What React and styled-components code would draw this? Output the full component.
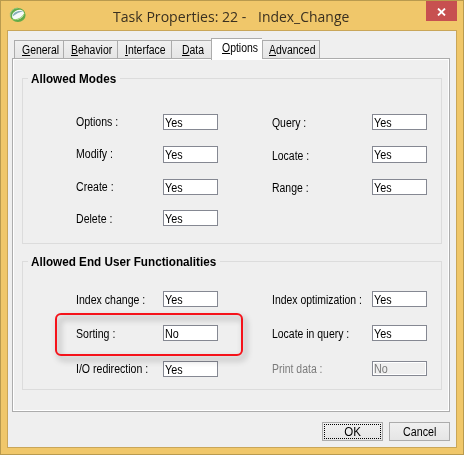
import React from "react";
import styled, { createGlobalStyle } from "styled-components";

const GlobalStyle = createGlobalStyle`
  * { box-sizing: border-box; }
  body { margin: 0; overflow: hidden; }
`;

const Window = styled.div`
  width: 464px;
  height: 455px;
  background: #f0c76a;
  border: 1px solid #b99a4e;
  padding: 0 6px 6px;
  font: 12px/16px "Liberation Sans", Arial, sans-serif;
  color: #000;
`;

const TitleBar = styled.header`
  height: 29px;
  display: flex;
  align-items: flex-start;
`;

const AppIcon = styled.svg`
  flex: none;
  width: 17px;
  height: 16px;
  margin: 6px 0 0 2px;
`;

const Title = styled.h1`
  flex: none;
  margin: 4px 0 0 87px;
  width: 313px;
  font: 400 15px/22px "Open Sans", "Noto Sans", sans-serif;
  color: #3a3020;
  white-space: pre;
  display: flex;
`;

const TitlePart = styled.span`
  display: block;
  flex: none;
  width: ${(p) => p.$w}px;
  transform: scaleX(${(p) => p.$scale});
  transform-origin: 0 0;
`;

const CloseButton = styled.button`
  flex: none;
  width: 31px;
  height: 20px;
  padding: 2px 0 0;
  border: 0;
  background: #c75050;
  display: flex;
  align-items: center;
  justify-content: center;
`;

const Body = styled.main`
  width: 450px;
  height: 418px;
  background: #efefef;
  border: 1px solid #c9a659;
  padding: 7px 6px 0 4px;
`;

const Tabs = styled.nav`
  display: flex;
  align-items: flex-end;
  height: 20px;
  padding-left: 2px;
`;

const Tab = styled.div`
  position: relative;
  width: ${(p) => p.$w}px;
  height: ${(p) => (p.$active ? 22 : 18)}px;
  margin-bottom: ${(p) => (p.$active ? -2 : 0)}px;
  padding: 1px 0 0 ${(p) => p.$pad}px;
  border: 1px solid #acacac;
  border-bottom: 0;
  border-right-width: ${(p) => (p.$last ? 1 : 0)}px;
  background: ${(p) => (p.$active ? "#fff" : "linear-gradient(#f0f0f0, #e5e5e5)")};
`;

const Text = styled.span`
  display: block;
  width: max-content;
  white-space: pre;
  transform: scaleX(${(p) => p.$scale || 0.87});
  transform-origin: ${(p) => p.$origin || "0 0"};
`;

const Panel = styled.section`
  width: 438px;
  height: 354px;
  border: 1px solid #acacac;
  box-shadow: inset 0 0 0 1px #fff;
  padding: 12px 0 0 9px;
`;

const Group = styled.section`
  position: relative;
  width: 420px;
  height: ${(p) => p.$h}px;
  margin: 7px 0 ${(p) => p.$after || 0}px;
  border: 1px solid #dcdcdc;
`;

const Legend = styled.h2`
  width: ${(p) => p.$w}px;
  height: 16px;
  margin: -8px 0 0 5px;
  padding-left: 3px;
  background: #efefef;
  font: 700 12px/16px "Liberation Sans", Arial, sans-serif;
`;

const Rows = styled.div`
  display: grid;
  grid-template-rows: ${(p) => p.$rows};
  padding: ${(p) => p.$top}px 0 0 53px;
`;

const Row = styled.div`
  display: grid;
  grid-template-columns: 87px 109px 100px 55px;
  align-items: start;
`;

const Label = styled.label`
  padding-top: ${(p) => p.$shift}px;
  color: ${(p) => (p.$off ? "#7b7b7b" : "#000")};
`;

const Cell = styled.div`
  width: 55px;
`;

const Field = styled.div`
  height: ${(p) => p.$h || 16}px;
  padding-left: 1px;
  border: 1px solid #858892;
  background: ${(p) => (p.$off ? "#efefef" : "#fff")};
  box-shadow: ${(p) => (p.$off ? "inset 0 0 0 1px #fff" : "none")};
  color: ${(p) => (p.$off ? "#7b7b7b" : "#000")};
  line-height: ${(p) => (p.$off ? 14 : 16)}px;
`;

const Highlight = styled.div`
  position: absolute;
  left: 32px;
  top: 51px;
  width: 188px;
  height: 43px;
  border: 2px solid #f5121a;
  border-radius: 6px;
  filter: drop-shadow(3px 4px 3px rgba(0, 0, 0, 0.4));
`;

const Actions = styled.footer`
  display: flex;
  gap: 6px;
  padding: 10px 0 0 310px;
`;

const Button = styled.button`
  width: ${(p) => p.$w}px;
  height: 19px;
  padding: 1px;
  border: 1px solid #acacac;
  background: linear-gradient(#f0f0f0, #e5e5e5);
  font: inherit;
  color: #000;
`;

const Face = styled.span`
  display: flex;
  height: 15px;
  align-items: center;
  justify-content: center;
  border: 1px ${(p) => (p.$focus ? "dotted #000" : "solid transparent")};
`;

const tabs = [
  ["General", 49, 7],
  ["Behavior", 54, 7],
  ["Interface", 54, 7],
  ["Data", 40, 10],
  ["Options", 51, 10],
  ["Advanced", 58, 6],
];

const modes = [
  { left: "Options :", right: "Query :", ls: 0, rs: 1 },
  { left: "Modify :", right: "Locate :", ls: 0, rs: 2, h: 17 },
  { left: "Create :", right: "Range :", ls: 0, rs: 1 },
  { left: "Delete :", ls: 1 },
];

const functions = [
  { left: "Index change :", right: "Index optimization :", ls: 1, rs: 1 },
  { left: "Sorting :", value: "No", right: "Locate in query :", ls: 1, rs: 1 },
  { left: "I/O redirection :", right: "Print data :", ls: 0, rs: 0, off: true },
];

function FieldCell({ height, value, off }) {
  return (
    <Cell>
      <Field $h={height} $off={off}><Text $scale={0.9}>{value}</Text></Field>
    </Cell>
  );
}

function PropertyRow({ item }) {
  return (
    <Row>
      <Label $shift={item.ls}><Text $scale={0.88}>{item.left}</Text></Label>
      <FieldCell height={item.h} value={item.value || "Yes"} />
      {item.right && (
        <>
          <Label $shift={item.rs} $off={item.off}><Text>{item.right}</Text></Label>
          <FieldCell height={item.off ? 15 : item.h} value={item.off ? "No" : "Yes"} off={item.off} />
        </>
      )}
    </Row>
  );
}

export default function App() {
  return (
    <>
      <GlobalStyle />
      <Window>
        <TitleBar>
          <AppIcon viewBox="0 0 17 16">
            <ellipse cx="8.9" cy="8" rx="7.7" ry="7" fill="#62ab48" />
            <path d="M1.4 9.5A7.7 7 0 0 1 9 1" fill="none" stroke="#8cc47c" strokeWidth="1" />
            <ellipse cx="9" cy="7.7" rx="6.4" ry="4.6" transform="rotate(-28 9 7.7)" fill="#f6faf8" />
            <path d="M3.6 9.6C3.8 5.6 8 3 14.2 4.2 11 5 6.800 6.600 3.600 9.600Z" fill="#86aeb8" />
            <path d="M3 12.400C8 13.600 13 11 15.600 6.200" fill="none" stroke="#8ccb62" strokeWidth="1" />
          </AppIcon>
          <Title>
            <TitlePart $w={145} $scale={0.94}>Task Properties: 22 -</TitlePart>
            <TitlePart $w={100} $scale={0.93}>Index_Change</TitlePart>
          </Title>
          <CloseButton aria-label="Close">
            <svg width="9" height="8" viewBox="0 0 9 8">
              <path d="M1 .5 8 7.5M8 .5 1 7.5" stroke="#fff" strokeWidth="1.8" />
            </svg>
          </CloseButton>
        </TitleBar>
        <Body>
          <Tabs>
            {tabs.map(([name, w, pad]) => (
              <Tab key={name} $w={w} $pad={pad} $active={name === "Options"} $last={name === "Advanced"}>
                <Text><u>{name[0]}</u>{name.slice(1)}</Text>
              </Tab>
            ))}
          </Tabs>
          <Panel>
            <Group $h={166} $after={17}>
              <Legend $w={92}><Text $scale={0.975}>Allowed Modes</Text></Legend>
              <Rows $top={27} $rows="32px 33px 31px 16px">
                {modes.map((m) => <PropertyRow key={m.left} item={m} />)}
              </Rows>
            </Group>
            <Group $h={129}>
              <Legend $w={192}><Text $scale={0.975}>Allowed End User Functionalities</Text></Legend>
              <Rows $top={21} $rows="34px 36px 16px">
                {functions.map((m) => <PropertyRow key={m.left} item={m} />)}
              </Rows>
              <Highlight />
            </Group>
          </Panel>
          <Actions>
            <Button $w={61}><Face $focus><Text $origin="50% 0" $scale={0.96}>OK</Text></Face></Button>
            <Button $w={62}><Face><Text $origin="50% 0" $scale={0.89}>Cancel</Text></Face></Button>
          </Actions>
        </Body>
      </Window>
    </>
  );
}
